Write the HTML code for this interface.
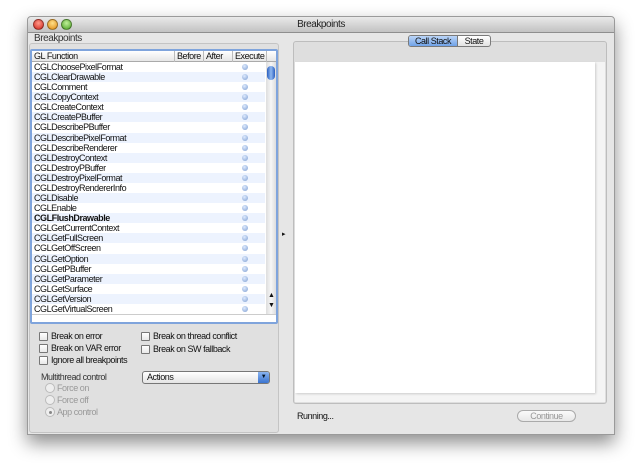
<!DOCTYPE html>
<html><head><meta charset="utf-8"><style>
*{margin:0;padding:0;box-sizing:border-box}
body{width:640px;height:472px;background:#fff;font-family:"Liberation Sans",sans-serif;font-size:9px;color:#111;position:relative;overflow:hidden;letter-spacing:-0.45px}
.a{position:absolute}
.win{left:27px;top:16px;width:588px;height:419px;background:#e6e6e6;border:1px solid #9a9a9a;box-shadow:0 8px 18px rgba(0,0,0,.45);border-radius:4px 4px 0 0}
.tb{left:0;top:0;width:586px;height:16px;background:linear-gradient(#e9e9e9,#c2c2c2);border-bottom:1px solid #8e8e8e;border-radius:4px 4px 0 0}
.dot{width:11px;height:11px;border-radius:50%;top:2px;border:1px solid rgba(0,0,0,.35)}
.row{left:0;width:233px;height:10.08px;line-height:10px;padding-left:2px}
.ex{position:absolute;left:210px;top:2px;width:6px;height:6px;border-radius:50%;background:radial-gradient(circle at 40% 35%,#e0ecff,#7b9cd0)}
.cb{width:9px;height:9px;border:1px solid #777;background:linear-gradient(#fff,#e8e8e8);border-radius:1px}
.rd{width:10px;height:10px;border:1px solid #bbb;border-radius:50%;background:#eee}
.lbl{font-size:9px}
</style></head><body>
<div class="a win">
 <div class="a tb"></div>
 <div class="a dot" style="left:5px;background:radial-gradient(circle at 50% 35%,#ff9a8a,#d0231a)"></div>
 <div class="a dot" style="left:19px;background:radial-gradient(circle at 50% 35%,#ffe08a,#e08a10)"></div>
 <div class="a dot" style="left:33px;background:radial-gradient(circle at 50% 35%,#c0f09a,#4aa020)"></div>
 <div class="a" style="left:0;width:586px;top:2px;text-align:center;font-size:10px;color:#222">Breakpoints</div>
</div>
<div class="a" style="left:34px;top:33px;font-size:10px;color:#333">Breakpoints</div>
<div class="a" style="left:29px;top:43px;width:250px;height:390px;border:1px solid #c4c4c4;border-radius:3px;background:#e0e0e0"></div>
<div class="a" style="left:30px;top:49px;width:248px;height:275px;border:2px solid #7fa4dc;background:#fff;border-radius:2px"></div>
<div class="a" style="left:32px;top:51px;width:244px;height:11px;background:linear-gradient(#fff,#e6e6e6);border-bottom:1px solid #aaa;line-height:10px">
 <span class="a" style="left:2px">GL Function</span>
 <span class="a" style="left:142px;height:11px;border-left:1px solid #bbb;padding-left:2px">Before</span>
 <span class="a" style="left:171px;height:11px;border-left:1px solid #bbb;padding-left:2px">After</span>
 <span class="a" style="left:200px;height:11px;border-left:1px solid #bbb;padding-left:2px">Execute</span>
 <span class="a" style="left:234px;height:11px;border-left:1px solid #bbb"></span>
</div>
<div class="a" style="left:266px;top:62px;width:10px;height:252px;background:linear-gradient(90deg,#ddd,#f6f6f6,#ddd)"></div>
<div class="a" style="left:267px;top:66px;width:8px;height:14px;border-radius:4px;background:linear-gradient(90deg,#2a5fc0,#8fb8f0,#2a5fc0)"></div>
<div class="a" style="left:268px;top:292px;font-size:7px">▲</div>
<div class="a" style="left:268px;top:302px;font-size:7px">▼</div>
<div class="a" style="left:32px;top:62px;width:233px">
<div class="row a" style="top:0">CGLChoosePixelFormat<i class="ex"></i></div>
<div class="row a" style="top:10.08px;background:#edf3fe">CGLClearDrawable<i class="ex"></i></div>
<div class="row a" style="top:20.16px">CGLComment<i class="ex"></i></div>
<div class="row a" style="top:30.24px;background:#edf3fe">CGLCopyContext<i class="ex"></i></div>
<div class="row a" style="top:40.32px">CGLCreateContext<i class="ex"></i></div>
<div class="row a" style="top:50.4px;background:#edf3fe">CGLCreatePBuffer<i class="ex"></i></div>
<div class="row a" style="top:60.48px">CGLDescribePBuffer<i class="ex"></i></div>
<div class="row a" style="top:70.56px;background:#edf3fe">CGLDescribePixelFormat<i class="ex"></i></div>
<div class="row a" style="top:80.64px">CGLDescribeRenderer<i class="ex"></i></div>
<div class="row a" style="top:90.72px;background:#edf3fe">CGLDestroyContext<i class="ex"></i></div>
<div class="row a" style="top:100.8px">CGLDestroyPBuffer<i class="ex"></i></div>
<div class="row a" style="top:110.88px;background:#edf3fe">CGLDestroyPixelFormat<i class="ex"></i></div>
<div class="row a" style="top:120.96px">CGLDestroyRendererInfo<i class="ex"></i></div>
<div class="row a" style="top:131.04px;background:#edf3fe">CGLDisable<i class="ex"></i></div>
<div class="row a" style="top:141.12px">CGLEnable<i class="ex"></i></div>
<div class="row a" style="top:151.2px;background:#edf3fe;font-weight:bold">CGLFlushDrawable<i class="ex"></i></div>
<div class="row a" style="top:161.28px">CGLGetCurrentContext<i class="ex"></i></div>
<div class="row a" style="top:171.36px;background:#edf3fe">CGLGetFullScreen<i class="ex"></i></div>
<div class="row a" style="top:181.44px">CGLGetOffScreen<i class="ex"></i></div>
<div class="row a" style="top:191.52px;background:#edf3fe">CGLGetOption<i class="ex"></i></div>
<div class="row a" style="top:201.6px">CGLGetPBuffer<i class="ex"></i></div>
<div class="row a" style="top:211.68px;background:#edf3fe">CGLGetParameter<i class="ex"></i></div>
<div class="row a" style="top:221.76px">CGLGetSurface<i class="ex"></i></div>
<div class="row a" style="top:231.84px;background:#edf3fe">CGLGetVersion<i class="ex"></i></div>
<div class="row a" style="top:241.92px;height:9px;overflow:hidden">CGLGetVirtualScreen<i class="ex"></i></div>
</div>
<div class="a" style="left:32px;top:314px;width:244px;height:1px;background:#ccc"></div>

<div class="a cb" style="left:39px;top:332px"></div><div class="a lbl" style="left:51px;top:331px">Break on error</div>
<div class="a cb" style="left:39px;top:344px"></div><div class="a lbl" style="left:51px;top:343px">Break on VAR error</div>
<div class="a cb" style="left:39px;top:356px"></div><div class="a lbl" style="left:51px;top:355px">Ignore all breakpoints</div>
<div class="a cb" style="left:141px;top:332px"></div><div class="a lbl" style="left:153px;top:331px">Break on thread conflict</div>
<div class="a cb" style="left:141px;top:345px"></div><div class="a lbl" style="left:153px;top:344px">Break on SW fallback</div>
<div class="a lbl" style="left:41px;top:372px;color:#333">Multithread control</div>
<div class="a rd" style="left:45px;top:383px"></div><div class="a lbl" style="left:57px;top:383px;color:#999">Force on</div>
<div class="a rd" style="left:45px;top:395px"></div><div class="a lbl" style="left:57px;top:395px;color:#999">Force off</div>
<div class="a rd" style="left:45px;top:407px"></div><div class="a" style="left:48.5px;top:410.5px;width:3px;height:3px;border-radius:50%;background:#888"></div><div class="a lbl" style="left:57px;top:407px;color:#999">App control</div>
<div class="a" style="left:142px;top:371px;width:128px;height:13px;border:1px solid #777;border-radius:3px;background:linear-gradient(#fff,#e4e4e4);line-height:11px;padding-left:4px">Actions</div>
<div class="a" style="left:258px;top:372px;width:11px;height:11px;background:linear-gradient(#8ab4f0,#3a74d0);border-radius:0 2px 2px 0;color:#012;font-size:6px;text-align:center;line-height:11px">▼</div>

<div class="a" style="left:282px;top:230px;font-size:7px">▸</div>

<div class="a" style="left:293px;top:41px;width:314px;height:363px;border:1px solid #bdbdbd;border-radius:3px;background:#dedede"></div>
<div class="a" style="left:295px;top:62px;width:310px;height:340px;background:#f4f4f4"></div>
<div class="a" style="left:295px;top:62px;width:300px;height:331px;background:#fff;box-shadow:1px 1px 2px #ccc"></div>
<div class="a" style="left:408px;top:35px;width:83px;height:12px;border:1px solid #7a7a7a;border-radius:3px;background:linear-gradient(#fff,#e2e2e2)"></div>
<div class="a" style="left:409px;top:36px;width:49px;height:10px;background:linear-gradient(#bcd6f8,#6fa2e8);border-radius:2px 0 0 2px;border-right:1px solid #777;text-align:center;line-height:10px">Call Stack</div>
<div class="a" style="left:458px;top:36px;width:32px;height:10px;text-align:center;line-height:10px">State</div>

<div class="a lbl" style="left:297px;top:411px">Running...</div>
<div class="a" style="left:517px;top:410px;width:59px;height:12px;border:1px solid #aaa;border-radius:6px;background:linear-gradient(#fafafa,#e8e8e8);text-align:center;line-height:10px;color:#999">Continue</div>
</body></html>
